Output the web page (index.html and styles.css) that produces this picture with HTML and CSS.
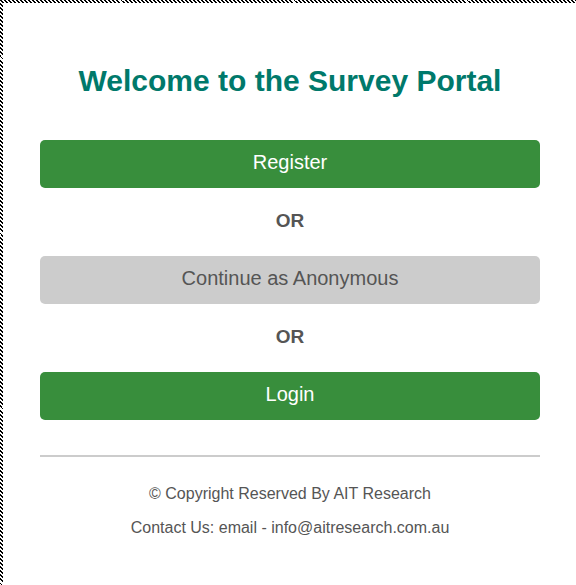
FILE: index.html
```html
<!DOCTYPE html>
<html>
<head>
<meta charset="utf-8">
<link rel="stylesheet" href="styles.css">
</head>
<body>
<main class="portal">
  <h1 class="title">Welcome to the Survey Portal</h1>
  <div class="actions">
    <button class="btn btn-primary">Register</button>
    <div class="or">OR</div>
    <button class="btn btn-secondary">Continue as Anonymous</button>
    <div class="or">OR</div>
    <button class="btn btn-primary">Login</button>
  </div>
  <hr class="divider">
  <footer class="footer">
    <p>© Copyright Reserved By AIT Research</p>
    <p>Contact Us: email - info@aitresearch.com.au</p>
  </footer>
</main>
</body>
</html>
```
FILE: styles.css
```css
* { box-sizing: border-box; }
html, body { margin: 0; padding: 0; background: #fff; }
body {
  min-height: 585px;
  border-style: solid;
  border-width: 3px 0 0 3px;
  border-image: repeating-linear-gradient(45deg, #000 0 1.4px, #fff 1.4px 2.83px) 3;
  font-family: "Liberation Sans", Arial, sans-serif;
}
.portal {
  width: 500px;
  margin-left: 37px;
  padding-top: 60px;
}
.title {
  margin: 0;
  text-align: center;
  font-size: 30px;
  line-height: 36px;
  font-weight: bold;
  color: #00796b;
}
.actions {
  margin-top: 41px;
  display: flex;
  flex-direction: column;
}
.btn {
  height: 48px;
  border: 0;
  border-radius: 5px;
  font-family: inherit;
  font-size: 20px;
  padding: 0 0 3px;
}
.btn-primary { background: #388e3c; color: #fff; }
.btn-secondary { background: #cccccc; color: #555; }
.or {
  height: 68px;
  padding-bottom: 3px;
  display: flex;
  align-items: center;
  justify-content: center;
  font-size: 19px;
  font-weight: bold;
  color: #555;
}
.divider {
  margin: 35px 0 0;
  border: 0;
  height: 2px;
  background: #ccc;
}
.footer {
  padding-top: 20px;
  text-align: center;
  font-size: 16px;
  color: #555;
}
.footer p { margin: 0; line-height: 34px; }
```
